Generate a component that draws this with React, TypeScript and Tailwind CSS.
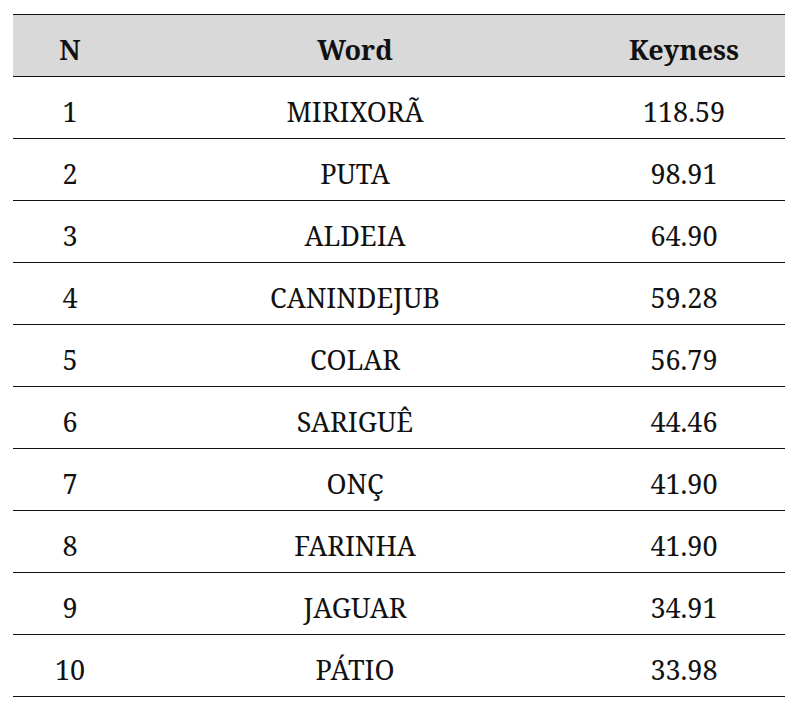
const ROWS: [number, string, string][] = [
  [1, 'MIRIXORÃ', '118.59'],
  [2, 'PUTA', '98.91'],
  [3, 'ALDEIA', '64.90'],
  [4, 'CANINDEJUB', '59.28'],
  [5, 'COLAR', '56.79'],
  [6, 'SARIGUÊ', '44.46'],
  [7, 'ONÇ', '41.90'],
  [8, 'FARINHA', '41.90'],
  [9, 'JAGUAR', '34.91'],
  [10, 'PÁTIO', '33.98'],
]

const cols = 'grid grid-cols-[114px_456px_1fr]'

export default function App() {
  return (
    <div className="bg-white w-[786px] h-[712px] pt-[14px] pl-[13px] pr-px font-['Noto_Serif',serif]">
      <div className="border-t-[1.5px] border-[#111]">
        <div className={`${cols} bg-[#d9d9d9] h-[62px] pt-[10px] leading-[50px] text-[27px] font-bold text-[#111] text-center border-b-[1.5px] border-[#111]`}>
          <div>N</div>
          <div>Word</div>
          <div>Keyness</div>
        </div>
        {ROWS.map(([n, word, key]) => (
          <div key={n} className={`${cols} h-[62px] pt-[10px] leading-[50px] text-[27px] text-[#111] text-center border-b-[1.5px] border-[#111]`}>
            <div>{n}</div>
            <div>{word}</div>
            <div>{key}</div>
          </div>
        ))}
      </div>
    </div>
  )
}
